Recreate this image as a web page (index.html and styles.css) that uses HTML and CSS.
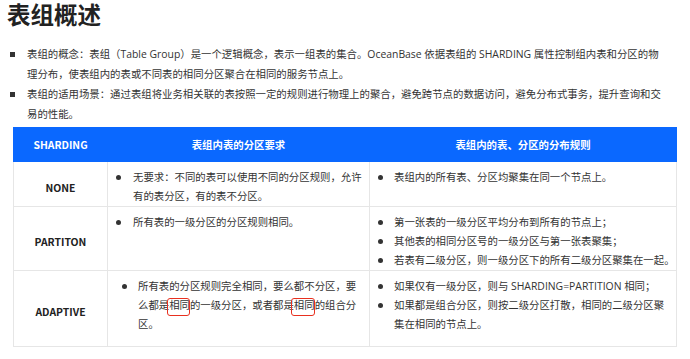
FILE: index.html
```html
<!DOCTYPE html>
<html lang="zh-CN">
<head>
<meta charset="utf-8">
<title>表组概述</title>
<link rel="stylesheet" href="styles.css">
</head>
<body>
<main class="doc">
  <h1 class="title">表组概述</h1>
  <ul class="points">
    <li>表组的概念：表组（Table Group）是一个逻辑概念，表示一组表的集合。OceanBase 依据表组的 SHARDING 属性控制组内表和分区的物理分布，使表组内的表或不同表的相同分区聚合在相同的服务节点上。</li>
    <li>表组的适用场景：通过表组将业务相关联的表按照一定的规则进行物理上的聚合，避免跨节点的数据访问，避免分布式事务，提升查询和交易的性能。</li>
  </ul>
  <table class="tg">
    <colgroup>
      <col class="w1"><col class="w2"><col class="w3">
    </colgroup>
    <thead>
      <tr class="r-head">
        <th>SHARDING</th>
        <th>表组内表的分区要求</th>
        <th>表组内的表、分区的分布规则</th>
      </tr>
    </thead>
    <tbody>
      <tr class="r-none">
        <td class="key">NONE</td>
        <td><ul class="dots"><li>无要求：不同的表可以使用不同的分区规则，允许有的表分区，有的表不分区。</li></ul></td>
        <td class="rules"><ul class="dots"><li>表组内的所有表、分区均聚集在同一个节点上。</li></ul></td>
      </tr>
      <tr class="r-part">
        <td class="key">PARTITON</td>
        <td><ul class="dots"><li>所有表的一级分区的分区规则相同。</li></ul></td>
        <td class="rules"><ul class="dots">
          <li>第一张表的一级分区平均分布到所有的节点上；</li>
          <li>其他表的相同分区号的一级分区与第一张表聚集；</li>
          <li class="one-line">若表有二级分区，则一级分区下的所有二级分区聚集在一起。</li>
        </ul></td>
      </tr>
      <tr class="r-adapt">
        <td class="key">ADAPTIVE</td>
        <td><ul class="dots dots-in"><li>所有表的分区规则完全相同，要么都不分区，要么都是<span class="mark">相同</span>的一级分区，或者都是<span class="mark mark-b">相同</span>的组合分区。</li></ul></td>
        <td class="rules"><ul class="dots">
          <li>如果仅有一级分区，则与 SHARDING=PARTITION 相同；</li>
          <li>如果都是组合分区，则按二级分区打散，相同的二级分区聚<br>集在相同的节点上。</li>
        </ul></td>
      </tr>
    </tbody>
  </table>
  <div class="rule"></div>
</main>
</body>
</html>
```

FILE: styles.css
```css
html, body {
  margin: 0;
  padding: 0;
  background: #ffffff;
}

body {
  font-family: "Open Sans", "Noto Sans CJK SC", sans-serif;
  font-size: 10.4px;
  color: #333333;
}

.doc {
  padding: 0 0 0 6px;
  width: 672px;
}

.title {
  margin: 0;
  padding: 0 0 0 1px;
  font-family: "Noto Sans CJK SC", sans-serif;
  font-size: 23.5px;
  line-height: 28px;
  font-weight: 700;
  color: #222222;
}

.points {
  list-style: none;
  margin: 16px 0 0 0;
  padding: 0 0 0 21px;
  width: 640px;
}

.points li {
  position: relative;
  line-height: 20px;
}

.points li::before {
  content: "";
  position: absolute;
  left: -17px;
  top: 8px;
  width: 4.5px;
  height: 4.5px;
  background: #333333;
}

.tg {
  margin: 3px 0 0 7px;
  width: 663px;
  border-collapse: collapse;
  table-layout: fixed;
}

.w1 { width: 94px; }
.w2 { width: 262px; }
.w3 { width: 307px; }

.tg th {
  background: #0a68ff;
  color: #ffffff;
  font-family: "Noto Sans CJK SC", sans-serif;
  font-weight: 700;
  font-size: 10.4px;
  text-align: center;
  vertical-align: middle;
  padding: 0;
  border: 1px solid #0a68ff;
  border-left-color: #86b2ff;
}

.tg th:first-child {
  border-left-color: #0a68ff;
}

.tg td {
  border: 1px solid #e6e6e6;
  padding: 6px 5px 0 0;
  vertical-align: top;
  line-height: 19px;
}

.tg td.rules {
  padding-right: 0;
}

.r-head { height: 34px; }
.r-none { height: 44px; }
.r-part { height: 62px; }
.r-adapt { height: 76px; }

.tg td.key {
  vertical-align: middle;
  text-align: center;
  padding: 6px 0 0 0;
  font-family: "Noto Sans CJK SC", sans-serif;
  font-weight: 700;
  color: #222222;
}

.dots {
  list-style: none;
  margin: 0;
  padding: 0;
}

.dots li {
  position: relative;
  padding-left: 25px;
}

.rules .dots li {
  padding-left: 24px;
}

.dots li.one-line {
  white-space: nowrap;
}

.dots li::before {
  content: "";
  position: absolute;
  left: 8px;
  top: 7px;
  width: 5px;
  height: 5px;
  border-radius: 50%;
  background: #333333;
}

.dots-in li {
  padding-left: 30px;
}

.dots-in li::before {
  left: 14px;
}

.mark {
  position: relative;
}

.mark::after {
  content: "";
  position: absolute;
  left: -2px;
  right: 0;
  top: 0;
  bottom: -4px;
  border: 1.5px solid #e8301f;
  border-radius: 3px;
}

.mark-b::after {
  left: -3px;
}

.rule {
  margin: 14px 0 0 2px;
  width: 670px;
  height: 2px;
  background: #f0f0f0;
}
```
